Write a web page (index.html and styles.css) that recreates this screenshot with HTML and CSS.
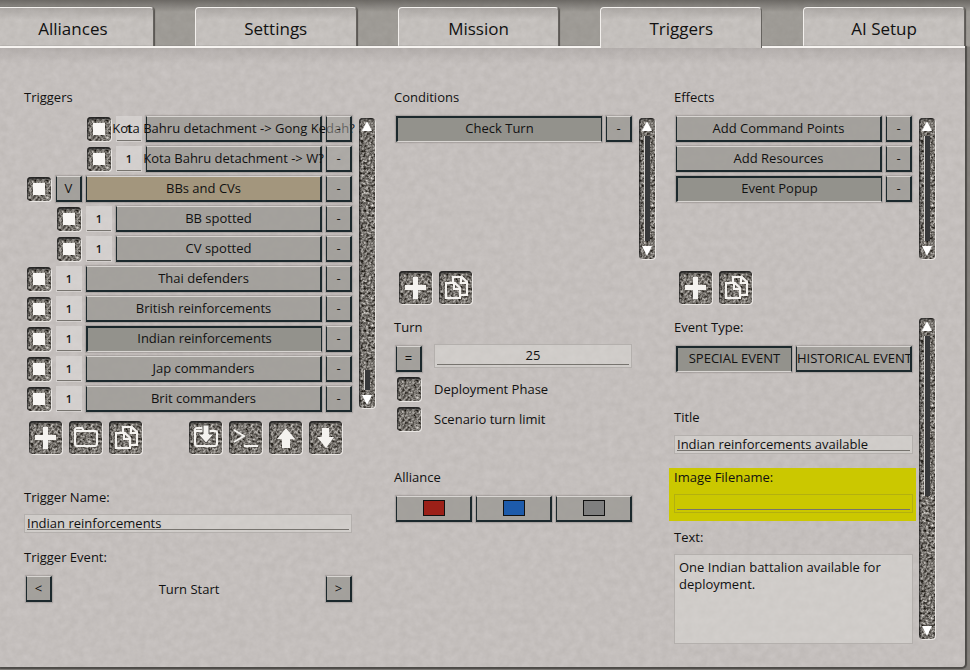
FILE: index.html
```
<!DOCTYPE html>
<html lang="en">
<head>
    <meta charset="UTF-8">
    <meta name="viewport" content="width=device-width, initial-scale=1.0">
    <title>Triggers</title>
    <link rel="stylesheet" href="styles.css">
</head>
<body>
    <!-- Icon shapes shared by the toolbars -->
    <svg class="icon-defs" aria-hidden="true">
        <symbol id="icon-plus" viewBox="0 0 33 33">
            <path fill="#f4f2ef" d="M14 6h5v8h8v5h-8v9h-5v-9H6v-5h8z"/>
        </symbol>
        <symbol id="icon-folder" viewBox="0 0 33 33">
            <path fill="none" stroke="#f4f2ef" stroke-width="2" d="M6 23V9q0-2 2-2h5l2 3h11q2 0 2 2v11q0 2-2 2H8q-2 0-2-2zM6 10h9"/>
        </symbol>
        <symbol id="icon-copy" viewBox="0 0 33 33">
            <path fill="none" stroke="#f4f2ef" stroke-width="2" d="M14 11V6h9l5 5v13h-6M22 6v6h6M7 27V12h9l5 5v10zM15 12v6h6"/>
        </symbol>
        <symbol id="icon-import" viewBox="0 0 33 33">
            <path fill="none" stroke="#f4f2ef" stroke-width="2" d="M6 23V9q0-2 2-2h5l2 3h11q2 0 2 2v11q0 2-2 2H8q-2 0-2-2zM6 10h9"/>
            <path fill="#f4f2ef" stroke="#55524e" stroke-width="1" d="M14 4h6v9h5l-8 9-8-9h5z"/>
        </symbol>
        <symbol id="icon-console" viewBox="0 0 33 33">
            <path fill="none" stroke="#f4f2ef" stroke-width="2" d="M5 9l10 6-10 6M15 25h14"/>
        </symbol>
        <symbol id="icon-up" viewBox="0 0 33 33">
            <path fill="#f4f2ef" d="M17 7l9 11h-5v9h-8v-9H8z"/>
        </symbol>
        <symbol id="icon-down" viewBox="0 0 33 33">
            <path fill="#f4f2ef" d="M13 7h7v9h5l-8 11-9-11h5z"/>
        </symbol>
    </svg>

    <nav class="tabs">
        <button class="tab">Alliances</button>
        <button class="tab">Settings</button>
        <button class="tab">Mission</button>
        <button class="tab active">Triggers</button>
        <button class="tab">AI Setup</button>
    </nav>

    <main class="panel">
        <!-- Trigger list -->
        <section class="column">
            <h2 class="label">Triggers</h2>
            <div class="list-area trigger-list">
                <ul class="list">
                    <li class="row indent-2">
                        <input type="checkbox" class="check" aria-label="Gong Kedah enabled" checked>
                        <input type="text" class="count" aria-label="Gong Kedah count" value="1">
                        <button class="btn name spill"><span>Kota Bahru detachment -&gt; Gong Kedah?</span></button>
                        <button class="btn small">-</button>
                    </li>
                    <li class="row indent-2">
                        <input type="checkbox" class="check" aria-label="Kota Bahru enabled" checked>
                        <input type="text" class="count" aria-label="Kota Bahru count" value="1">
                        <button class="btn name spill"><span>Kota Bahru detachment -&gt; W?</span></button>
                        <button class="btn small">-</button>
                    </li>
                    <li class="row">
                        <input type="checkbox" class="check" aria-label="BBs and CVs enabled" checked>
                        <button class="btn small">V</button>
                        <button class="btn name group">BBs and CVs</button>
                        <button class="btn small">-</button>
                    </li>
                    <li class="row indent-1">
                        <input type="checkbox" class="check" aria-label="BB spotted enabled" checked>
                        <input type="text" class="count" aria-label="BB spotted count" value="1">
                        <button class="btn name">BB spotted</button>
                        <button class="btn small">-</button>
                    </li>
                    <li class="row indent-1">
                        <input type="checkbox" class="check" aria-label="CV spotted enabled" checked>
                        <input type="text" class="count" aria-label="CV spotted count" value="1">
                        <button class="btn name">CV spotted</button>
                        <button class="btn small">-</button>
                    </li>
                    <li class="row">
                        <input type="checkbox" class="check" aria-label="Thai defenders enabled" checked>
                        <input type="text" class="count" aria-label="Thai defenders count" value="1">
                        <button class="btn name">Thai defenders</button>
                        <button class="btn small">-</button>
                    </li>
                    <li class="row">
                        <input type="checkbox" class="check" aria-label="British reinforcements enabled" checked>
                        <input type="text" class="count" aria-label="British reinforcements count" value="1">
                        <button class="btn name">British reinforcements</button>
                        <button class="btn small">-</button>
                    </li>
                    <li class="row">
                        <input type="checkbox" class="check" aria-label="Indian reinforcements enabled" checked>
                        <input type="text" class="count" aria-label="Indian reinforcements count" value="1">
                        <button class="btn name selected">Indian reinforcements</button>
                        <button class="btn small">-</button>
                    </li>
                    <li class="row">
                        <input type="checkbox" class="check" aria-label="Jap commanders enabled" checked>
                        <input type="text" class="count" aria-label="Jap commanders count" value="1">
                        <button class="btn name">Jap commanders</button>
                        <button class="btn small">-</button>
                    </li>
                    <li class="row">
                        <input type="checkbox" class="check" aria-label="Brit commanders enabled" checked>
                        <input type="text" class="count" aria-label="Brit commanders count" value="1">
                        <button class="btn name">Brit commanders</button>
                        <button class="btn small">-</button>
                    </li>
                </ul>
                <div class="scrollbar list-scroll">
                    <button class="arrow up" aria-label="Scroll up"></button>
                    <div class="track at-end"><div class="thumb short"></div></div>
                    <button class="arrow down" aria-label="Scroll down"></button>
                </div>
            </div>
            <div class="toolbar">
                <button class="tool" aria-label="Add trigger"><svg><use href="#icon-plus"/></svg></button>
                <button class="tool" aria-label="Add folder"><svg><use href="#icon-folder"/></svg></button>
                <button class="tool" aria-label="Copy trigger"><svg><use href="#icon-copy"/></svg></button>
                <button class="tool apart" aria-label="Import"><svg><use href="#icon-import"/></svg></button>
                <button class="tool" aria-label="Console"><svg><use href="#icon-console"/></svg></button>
                <button class="tool" aria-label="Move up"><svg><use href="#icon-up"/></svg></button>
                <button class="tool" aria-label="Move down"><svg><use href="#icon-down"/></svg></button>
            </div>
            <div class="trigger-form">
                <label class="label" for="trigger-name">Trigger Name:</label>
                <input type="text" class="field" id="trigger-name" value="Indian reinforcements">
                <h2 class="label">Trigger Event:</h2>
                <div class="stepper">
                    <button class="btn small">&lt;</button>
                    <span>Turn Start</span>
                    <button class="btn small">&gt;</button>
                </div>
            </div>
        </section>

        <!-- Conditions -->
        <section class="column">
            <h2 class="label">Conditions</h2>
            <div class="list-area fixed">
                <ul class="list">
                    <li class="row">
                        <button class="btn name selected">Check Turn</button>
                        <button class="btn small">-</button>
                    </li>
                </ul>
                <div class="scrollbar">
                    <button class="arrow up" aria-label="Scroll up"></button>
                    <div class="track"><div class="thumb"></div></div>
                    <button class="arrow down" aria-label="Scroll down"></button>
                </div>
            </div>
            <div class="toolbar low">
                <button class="tool" aria-label="Add condition"><svg><use href="#icon-plus"/></svg></button>
                <button class="tool" aria-label="Copy condition"><svg><use href="#icon-copy"/></svg></button>
            </div>
            <div class="condition-form">
                <label class="label" for="turn">Turn</label>
                <div class="turn-row">
                    <button class="btn small">=</button>
                    <input type="text" class="field centered" id="turn" value="25">
                </div>
                <label class="check-row"><input type="checkbox" class="check">Deployment Phase</label>
                <label class="check-row"><input type="checkbox" class="check">Scenario turn limit</label>
                <h2 class="label alliance-label">Alliance</h2>
                <div class="button-row">
                    <button class="btn" aria-label="Red"><span class="swatch red"></span></button>
                    <button class="btn" aria-label="Blue"><span class="swatch blue"></span></button>
                    <button class="btn" aria-label="Gray"><span class="swatch gray"></span></button>
                </div>
            </div>
        </section>

        <!-- Effects -->
        <section class="column">
            <h2 class="label">Effects</h2>
            <div class="list-area fixed">
                <ul class="list">
                    <li class="row">
                        <button class="btn name">Add Command Points</button>
                        <button class="btn small">-</button>
                    </li>
                    <li class="row">
                        <button class="btn name">Add Resources</button>
                        <button class="btn small">-</button>
                    </li>
                    <li class="row">
                        <button class="btn name selected">Event Popup</button>
                        <button class="btn small">-</button>
                    </li>
                </ul>
                <div class="scrollbar">
                    <button class="arrow up" aria-label="Scroll up"></button>
                    <div class="track"><div class="thumb"></div></div>
                    <button class="arrow down" aria-label="Scroll down"></button>
                </div>
            </div>
            <div class="toolbar low">
                <button class="tool" aria-label="Add effect"><svg><use href="#icon-plus"/></svg></button>
                <button class="tool" aria-label="Copy effect"><svg><use href="#icon-copy"/></svg></button>
            </div>
            <div class="effect-area">
                <div class="effect-form">
                    <h2 class="label">Event Type:</h2>
                    <div class="button-row type-row">
                        <button class="btn selected">SPECIAL EVENT</button>
                        <button class="btn"><span>HISTORICAL EVENT</span></button>
                    </div>
                    <label class="label" for="title">Title</label>
                    <input type="text" class="field" id="title" value="Indian reinforcements available">
                    <div class="highlight">
                        <label class="label" for="image">Image Filename:</label>
                        <input type="text" class="field" id="image">
                    </div>
                    <label class="label" for="text">Text:</label>
                    <textarea class="field area" id="text">One Indian battalion available for deployment.</textarea>
                </div>
                <div class="scrollbar effect-scroll">
                    <button class="arrow up" aria-label="Scroll up"></button>
                    <div class="track"><div class="thumb half"></div></div>
                    <button class="arrow down" aria-label="Scroll down"></button>
                </div>
            </div>
        </section>
    </main>
</body>
</html>
```
FILE: styles.css
```
:root {
    --edge: #1c292d;
    --concrete: url("data:image/svg+xml,%3Csvg xmlns='http://www.w3.org/2000/svg' width='1200' height='900'%3E%3Cfilter id='n' color-interpolation-filters='sRGB'%3E%3CfeTurbulence type='fractalNoise' baseFrequency='.13' numOctaves='4'/%3E%3CfeColorMatrix values='0 0 0 0 .35 0 0 0 0 .33 0 0 0 0 .3 0 .13 0 0 -.01'/%3E%3C/filter%3E%3Crect width='1200' height='900' filter='url(%23n)'/%3E%3C/svg%3E");
    --mesh: url("data:image/svg+xml,%3Csvg xmlns='http://www.w3.org/2000/svg' width='120' height='120'%3E%3Cfilter id='n' color-interpolation-filters='sRGB'%3E%3CfeTurbulence type='fractalNoise' baseFrequency='.4' numOctaves='2' stitchTiles='stitch'/%3E%3CfeColorMatrix values='0 1.2 0 0 -.14 0 1.2 0 0 -.155 0 1.2 0 0 -.175 0 0 0 0 1'/%3E%3C/filter%3E%3Crect width='120' height='120' filter='url(%23n)'/%3E%3C/svg%3E");
}

* {
    box-sizing: border-box;
}

body {
    margin: 0;
    padding: 7px 5px 3px 0;
    min-height: 100vh;
    display: flex;
    flex-direction: column;
    overflow-x: hidden;
    font-family: "Open Sans", "Noto Sans", sans-serif;
    font-size: 13px;
    line-height: 18px;
    color: #111;
    background: var(--concrete), linear-gradient(#6d6a66, #a29f9a 12px, #a29f9a 46px, #85827e 47px);
}

button, input, textarea {
    font: inherit;
    color: inherit;
    margin: 0;
    padding: 0;
}

.icon-defs {
    display: none;
}

/* Tabs */
.tabs {
    display: grid;
    grid-template-columns: repeat(5, 1fr);
    gap: 41px;
    height: 39px;
    margin-left: -8px;
}

.tab {
    border: 1px solid #f3f0ed;
    border-right-color: #66635f;
    border-bottom: none;
    border-radius: 4px 4px 0 0;
    background: var(--concrete), linear-gradient(#b0aca9, #cac6c3 12px);
    font-size: 17px;
    line-height: 24px;
    padding-top: 1px;
    box-shadow: 1px 0 1px #55524e;
}

.tab.active {
    position: relative;
    z-index: 1;
    height: 41px;
    box-shadow: none;
}

.panel {
    flex: 1;
    display: grid;
    grid-template-columns: 352fr 262fr 262fr;
    gap: 18px;
    padding: 40px 29px 20px 24px;
    border-top: 2px solid #f7f4f1;
    border-bottom-right-radius: 4px;
    background: var(--concrete), linear-gradient(#b8b3b1, #cac5c3 16px);
    box-shadow: 1px 1px 1px 1px #4d4b48;
}

.column {
    min-width: 0;
}

.label {
    display: block;
    margin: 0;
    padding-bottom: 2px;
    font-size: 13px;
    font-weight: normal;
}

/* Lists */
.list-area {
    display: flex;
    gap: 7px;
    margin-top: 8px;
}

.trigger-list {
    padding-right: 1px;
}

.list-area.fixed {
    height: 143px;
    padding-right: 1px;
}

.list {
    flex: 1;
    min-width: 0;
    margin: 0;
    padding: 0 0 0 2px;
    list-style: none;
}

.row {
    display: flex;
    gap: 4px;
    height: 26px;
    margin-bottom: 4px;
}

.row:last-child {
    margin-bottom: 0;
}

.indent-1 {
    padding-left: 30px;
}

.indent-2 {
    padding-left: 60px;
}

.btn {
    display: flex;
    align-items: center;
    justify-content: safe center;
    flex: 1;
    min-width: 0;
    height: 26px;
    padding-bottom: 1px;
    overflow: hidden;
    white-space: nowrap;
    border: solid var(--edge);
    border-width: 1px 2px 2px 1px;
    border-top-color: #d8d5d2;
    background: rgba(157, 155, 150, 0.85);
    box-shadow: 0 0 1px 1px rgba(120, 116, 112, 0.35);
}

.btn.small {
    flex: none;
    width: 26px;
}

.btn.selected {
    border-width: 2px 1px 1px 2px;
    border-color: var(--edge) var(--edge) #d8d5d2 var(--edge);
    padding-bottom: 3px;
    background: #93928c;
}

.btn.group {
    background: #a3967d;
}

.btn.spill {
    justify-content: center;
    overflow: visible;
}

.spill span {
    position: relative;
}

/* the long name shows faintly through the button beside it */
.spill + .btn {
    position: relative;
    background: rgba(157, 155, 150, 0.6);
}

.check {
    appearance: none;
    flex: none;
    display: grid;
    place-items: center;
    width: 24px;
    height: 24px;
    margin: 1px;
    border-radius: 4px;
    background: var(--mesh);
    box-shadow: inset 1px 2px 2px #222, 1px 1px 0 #e9e6e3;
}

.check:checked::before {
    content: "";
    width: 12px;
    height: 12px;
    background: #f7f5f3;
}

.count {
    flex: none;
    width: 26px;
    border: none;
    text-align: center;
    font-size: 11px;
    font-weight: 600;
    background: linear-gradient(#77746f, #77746f) center 24px / 24px 1px no-repeat, rgba(222, 219, 216, 0.6);
}

/* Scrollbars */
.scrollbar {
    flex: none;
    display: flex;
    flex-direction: column;
    align-items: center;
    width: 16px;
    margin-top: 2px;
    padding: 3px 0;
    border-radius: 4px;
    background: var(--mesh);
    box-shadow: inset 1px 1px 2px #222, 1px 1px 0 #e9e6e3;
}

.list-scroll {
    margin-bottom: 4px;
}

.arrow {
    border: solid transparent;
    border-width: 0 5px;
    background: none;
}

.arrow.up {
    border-bottom: 10px solid #fff;
}

.arrow.down {
    border-top: 10px solid #fff;
}

.track {
    flex: 1;
    display: flex;
    flex-direction: column;
    margin: 5px 0;
}

.track.at-end {
    justify-content: flex-end;
}

.thumb {
    width: 6px;
    height: 100%;
    border-left: 1px solid #d5d2ce;
    background: #37383a;
}

.thumb.short {
    height: 20px;
}

.thumb.half {
    height: 56%;
}

/* Toolbars */
.toolbar {
    display: flex;
    gap: 7px;
    margin: 9px 0 0 5px;
}

.toolbar.low {
    margin-top: 12px;
}

.tool {
    width: 33px;
    height: 33px;
    border: none;
    border-radius: 4px;
    background: var(--mesh);
    box-shadow: inset 1px 2px 2px #222, 1px 1px 0 #e9e6e3;
}

.tool.apart {
    margin-left: 40px;
}

.tool svg {
    display: block;
    width: 33px;
    height: 33px;
}

/* Forms */
.field {
    display: block;
    width: 100%;
    height: 19px;
    padding: 0 2px 2px;
    border: 1px solid #b4b0ad;
    outline: none;
    background: linear-gradient(#77746f, #77746f) center bottom 2px / calc(100% - 4px) 1px no-repeat, rgba(220, 217, 214, 0.5);
}

.trigger-form {
    padding: 34px 24px 0 0;
}

.trigger-form .field {
    margin: 6px 0 15px;
}

.stepper {
    display: flex;
    align-items: center;
    justify-content: space-between;
    margin: 8px 0 0 2px;
}

.condition-form {
    padding: 14px 24px 0 2px;
}

.condition-form .label {
    margin-left: -2px;
}

.turn-row {
    display: flex;
    align-items: flex-end;
    gap: 12px;
    margin: 6px 0 5px;
}

.turn-row .field {
    height: 24px;
    margin-bottom: 4px;
    flex: 1;
}

.field.centered {
    text-align: center;
}

.check-row {
    display: flex;
    align-items: center;
    gap: 12px;
    height: 24px;
    margin-bottom: 6px;
}

.condition-form .alliance-label {
    margin-top: 37px;
}

.button-row {
    display: flex;
    gap: 4px;
    margin-top: 8px;
}

.swatch {
    width: 22px;
    height: 16px;
    border: 1px solid #111;
}

.red {
    background: #9c2018;
}

.blue {
    background: #1d5bab;
}

.gray {
    background: #7f7f7f;
}

.effect-area {
    display: flex;
    gap: 6px;
    margin-top: 14px;
    padding-right: 1px;
}

.effect-form {
    flex: 1;
    min-width: 0;
}

.type-row {
    margin: 8px 1px 36px 2px;
}

#title {
    margin: 7px 0 14px;
}

.highlight {
    height: 53px;
    margin: 0 -3px 7px -5px;
    padding: 0 3px 0 5px;
    background: #cbc800;
}

.highlight .field {
    margin-top: 6px;
    border-color: #b3b010;
    background-color: transparent;
}

.area {
    height: 90px;
    margin-top: 6px;
    padding: 4px;
    resize: none;
    line-height: 17px;
    background: rgba(220, 217, 214, 0.5);
}

.effect-scroll {
    margin: 0 0 5px;
}
```
